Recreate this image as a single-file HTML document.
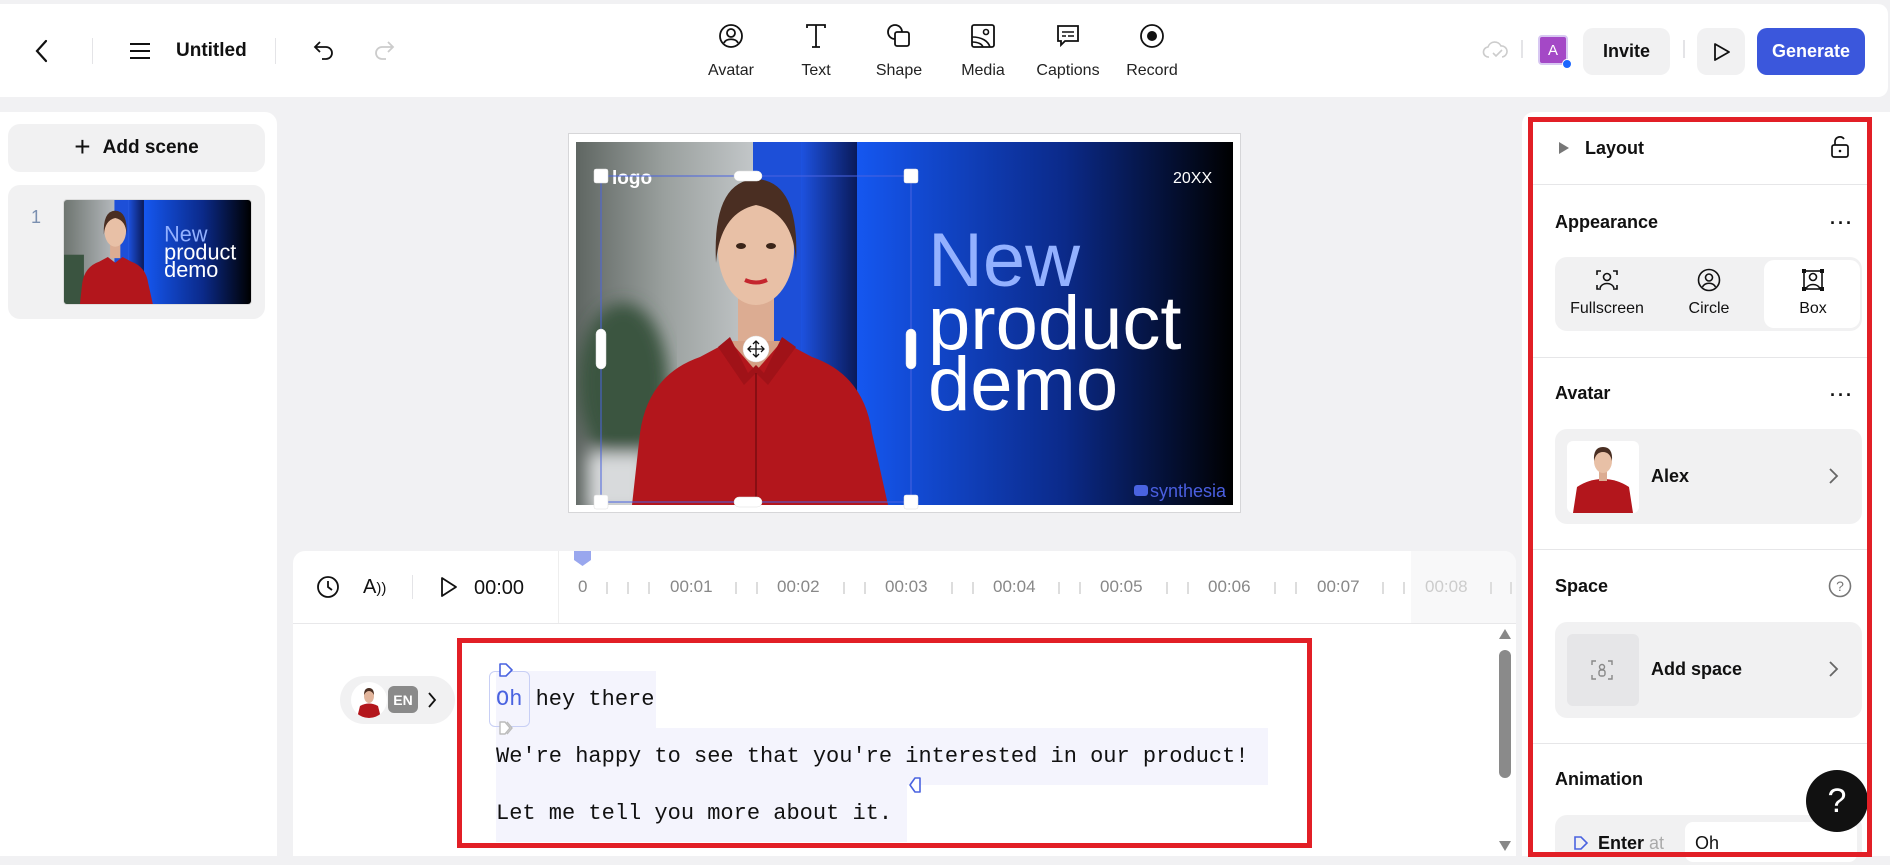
<!DOCTYPE html>
<html><head><meta charset="utf-8"><style>
*{box-sizing:border-box;margin:0;padding:0}
body{width:1890px;height:856px;overflow:hidden;background:#f1f1f3;font-family:"Liberation Sans",sans-serif;color:#111;position:relative}
.a{position:absolute}
.top{left:0;top:4px;width:1888px;height:93px;background:#fff;border-radius:0 10px 10px 0}
.sep{position:absolute;width:1px;background:#e4e4e7}
.tool{position:absolute;top:23px;width:80px;text-align:center;font-size:16px;color:#222}
.tool svg{display:block;margin:0 auto 13px}
.btn{position:absolute;border-radius:10px;background:#f1f1f2;font-weight:bold;font-size:18px;display:flex;align-items:center;justify-content:center}
.rp{left:1522px;top:112px;width:368px;height:744px;background:#fff;border-radius:12px 0 0 0}
.h{position:absolute;font-weight:bold;font-size:18px;color:#111}
.div{position:absolute;left:1532px;width:340px;height:1px;background:#e6e6e8}
.dots{position:absolute;font-size:18px;font-weight:bold;letter-spacing:2px}
.card{position:absolute;left:1555px;width:307px;background:#f1f1f2;border-radius:12px}
.mono{font-family:"Liberation Mono",monospace;font-size:22px;color:#111}
.tl{position:absolute;top:577px;font-size:17px;color:#888}
.tick{position:absolute;top:582px;width:2px;height:12px;background:#ddd}
</style></head><body>

<div class="a top"></div>
<svg class="a" style="left:32px;top:38px" width="20" height="26" viewBox="0 0 20 26"><path d="M14 3 L5 13 L14 23" fill="none" stroke="#111" stroke-width="2.2" stroke-linecap="round"/></svg>
<div class="sep" style="left:92px;top:38px;height:26px"></div>
<svg class="a" style="left:128px;top:41px" width="24" height="20"><path d="M2 3H22M2 10H22M2 17H22" stroke="#111" stroke-width="2"/></svg>
<div class="a" style="left:176px;top:40px;font-size:19px;font-weight:bold">Untitled</div>
<div class="sep" style="left:275px;top:38px;height:26px"></div>
<svg class="a" style="left:312px;top:38px" width="24" height="24" viewBox="0 0 24 24"><path d="M8 4 L3 9 L8 14 M3 9 H14 A6 6 0 0 1 14 21 H10" fill="none" stroke="#111" stroke-width="1.8"/></svg>
<svg class="a" style="left:372px;top:38px" width="24" height="24" viewBox="0 0 24 24"><path d="M16 4 L21 9 L16 14 M21 9 H10 A6 6 0 0 0 10 21 H14" fill="none" stroke="#ccc" stroke-width="1.8"/></svg>

<div class="tool" style="left:691px"><svg width="26" height="26" viewBox="0 0 26 26"><circle cx="13" cy="13" r="11" fill="none" stroke="#111" stroke-width="1.8"/><circle cx="13" cy="10" r="4" fill="none" stroke="#111" stroke-width="1.8"/><path d="M6 20 C8 15 18 15 20 20" fill="none" stroke="#111" stroke-width="1.8"/></svg>Avatar</div>
<div class="tool" style="left:776px"><svg width="26" height="26" viewBox="0 0 26 26"><path d="M4 5 V2 H22 V5 M13 2 V24 M9 24 H17" fill="none" stroke="#111" stroke-width="1.8"/></svg>Text</div>
<div class="tool" style="left:859px"><svg width="26" height="26" viewBox="0 0 26 26"><path d="M9 16 A7 7 0 1 1 16 9" fill="none" stroke="#111" stroke-width="1.8"/><rect x="9" y="9" width="14" height="14" rx="2" fill="none" stroke="#111" stroke-width="1.8"/></svg>Shape</div>
<div class="tool" style="left:943px"><svg width="26" height="26" viewBox="0 0 26 26"><rect x="2" y="2" width="22" height="22" rx="2" fill="none" stroke="#111" stroke-width="1.8"/><circle cx="16" cy="9" r="2.5" fill="none" stroke="#111" stroke-width="1.6"/><path d="M2 14 C12 14 18 18 20 24 M2 19 C8 19 12 21 13 24" fill="none" stroke="#111" stroke-width="1.6"/></svg>Media</div>
<div class="tool" style="left:1028px"><svg width="26" height="26" viewBox="0 0 26 26"><path d="M3 3 H23 V18 H10 L6 22 V18 H3 Z" fill="none" stroke="#111" stroke-width="1.8"/><path d="M7 9H19M7 13H11M13 13H19" stroke="#111" stroke-width="1.5"/></svg>Captions</div>
<div class="tool" style="left:1112px"><svg width="26" height="26" viewBox="0 0 26 26"><circle cx="13" cy="13" r="11" fill="none" stroke="#111" stroke-width="1.8"/><circle cx="13" cy="13" r="5" fill="#111"/></svg>Record</div>

<svg class="a" style="left:1482px;top:40px" width="26" height="20" viewBox="0 0 26 20"><path d="M7 17 A5 5 0 0 1 6 7 A7 7 0 0 1 19 6 A5 5 0 0 1 20 17 M11 13 L14 16 L20 10" fill="none" stroke="#ccc" stroke-width="1.6"/></svg>
<div class="sep" style="left:1521px;top:40px;height:18px;width:2px"></div>
<div class="a" style="left:1538px;top:35px;width:30px;height:30px;border-radius:4px;background:#a448c6;border:2px solid #d8c8f2;color:#fff;font-size:15px;display:flex;align-items:center;justify-content:center">A</div>
<div class="a" style="left:1562px;top:59px;width:10px;height:10px;border-radius:50%;background:#1b66ff;border:1.5px solid #fff"></div>
<div class="btn" style="left:1583px;top:28px;width:87px;height:47px">Invite</div>
<div class="sep" style="left:1683px;top:40px;height:18px;width:2px"></div>
<div class="btn" style="left:1697px;top:28px;width:48px;height:47px"><svg width="22" height="22" viewBox="0 0 22 22"><path d="M5 3 L19 11 L5 19 Z" fill="none" stroke="#111" stroke-width="1.8" stroke-linejoin="round"/></svg></div>
<div class="btn" style="left:1757px;top:28px;width:108px;height:47px;background:#3b57dc;color:#fff">Generate</div>

<!-- left panel -->
<div class="a" style="left:0;top:112px;width:277px;height:744px;background:#fff;border-radius:0 12px 0 0"></div>
<div class="a" style="left:8px;top:124px;width:257px;height:48px;background:#f1f1f2;border-radius:12px;display:flex;align-items:center;justify-content:center;font-size:19px;font-weight:bold"><span style="font-weight:normal;font-size:28px;margin-right:12px;margin-top:-3px">+</span>Add scene</div>
<div class="a" style="left:8px;top:185px;width:257px;height:134px;background:#f1f1f2;border-radius:12px"></div>
<div class="a" style="left:31px;top:207px;font-size:18px;color:#7a8fb0">1</div>
<svg class="a" style="left:63px;top:199px;border-radius:4px;border:1px solid #ddd" width="189" height="106" viewBox="8 9 657 363" preserveAspectRatio="none">
<defs><linearGradient id="g1b" x1="0" x2="1"><stop offset="0" stop-color="#1557f0"/><stop offset="0.55" stop-color="#0b2a8a"/><stop offset="1" stop-color="#000"/></linearGradient><linearGradient id="g2b" x1="0" x2="1"><stop offset="0" stop-color="#1d52e0"/><stop offset="1" stop-color="#0a1a5a"/></linearGradient><linearGradient id="bgb" x1="0" x2="1"><stop offset="0" stop-color="#6e7570"/><stop offset="1" stop-color="#b4b8bc"/></linearGradient></defs>
<rect x="8" y="9" width="177" height="363" fill="url(#bgb)"/><rect x="8" y="200" width="70" height="172" fill="#3a5440"/>
<rect x="185" y="9" width="48" height="363" fill="#1d4fd8"/><rect x="233" y="9" width="56" height="363" fill="url(#g2b)"/><rect x="289" y="9" width="376" height="363" fill="url(#g1b)"/>
<path d="M64 372 L72 300 Q80 242 132 224 L162 208 L188 228 L214 208 L244 224 Q296 242 304 300 L320 372 Z" fill="#b3161c"/><rect x="170" y="160" width="36" height="52" fill="#dcac92"/><ellipse cx="188" cy="117" rx="38" ry="55" fill="#e8c0a6"/><path d="M148 130 Q144 48 188 46 Q232 48 228 130 Q226 80 188 72 Q152 80 148 130Z" fill="#4a2e22"/>
<text x="360" y="153" font-size="76" fill="#93b1ff" font-family="Liberation Sans">New</text><text x="360" y="216" font-size="76" fill="#fff" font-family="Liberation Sans">product</text><text x="360" y="277" font-size="76" fill="#fff" font-family="Liberation Sans">demo</text>
</svg>

<!-- canvas -->
<svg class="a" style="left:568px;top:133px" width="673" height="380" viewBox="0 0 673 380">
<defs><linearGradient id="g1" x1="0" x2="1"><stop offset="0" stop-color="#1557f0"/><stop offset="0.55" stop-color="#0b2a8a"/><stop offset="1" stop-color="#000"/></linearGradient><linearGradient id="g2" x1="0" x2="1"><stop offset="0" stop-color="#1d52e0"/><stop offset="1" stop-color="#0a1a5a"/></linearGradient><linearGradient id="bg" x1="0" x2="1"><stop offset="0" stop-color="#5f6662"/><stop offset="0.5" stop-color="#9aa09e"/><stop offset="1" stop-color="#c2c6c8"/></linearGradient><filter id="bl"><feGaussianBlur stdDeviation="8"/></filter><clipPath id="cp"><rect x="8" y="9" width="657" height="363"/></clipPath></defs>
<rect x="0.5" y="0.5" width="672" height="379" fill="#fff" stroke="#d6d6d8"/>
<g clip-path="url(#cp)">
<rect x="8" y="9" width="177" height="363" fill="url(#bg)"/>
<g filter="url(#bl)"><ellipse cx="55" cy="250" rx="45" ry="80" fill="#3a5540"/><rect x="20" y="320" width="60" height="60" fill="#d8dadc"/></g>
<rect x="185" y="9" width="48" height="363" fill="#1d4fd8"/><rect x="233" y="9" width="56" height="363" fill="url(#g2)"/><rect x="289" y="9" width="376" height="363" fill="url(#g1)"/>
<path d="M64 372 L72 300 Q80 242 132 224 L162 208 L188 228 L214 208 L244 224 Q296 242 304 300 L320 372 Z" fill="#b3161c"/>
<rect x="170" y="160" width="36" height="52" fill="#dcac92"/>
<path d="M162 208 L188 238 L214 208 Z" fill="#d4a085"/>
<path d="M150 214 L162 204 L180 240 L188 232 L196 240 L214 204 L228 214 L200 252 L188 240 L176 252 Z" fill="#a01218"/>
<line x1="188" y1="240" x2="188" y2="372" stroke="#7a0c10" stroke-width="1.5"/>
<ellipse cx="188" cy="117" rx="38" ry="55" fill="#e8c0a6"/>
<path d="M148 130 Q144 48 188 46 Q232 48 228 130 Q226 80 188 72 Q152 80 148 130Z" fill="#4a2e22"/>
<ellipse cx="173" cy="113" rx="5" ry="3" fill="#3a2418"/><ellipse cx="203" cy="113" rx="5" ry="3" fill="#3a2418"/>
<path d="M177 147 Q188 152 199 147" stroke="#c4262e" stroke-width="4" fill="none"/>
</g>
<text x="44" y="51" font-size="19" font-weight="bold" fill="#fff" font-family="Liberation Sans">logo</text>
<text x="605" y="50" font-size="16" fill="#fff" font-family="Liberation Sans">20XX</text>
<text x="360" y="153" font-size="76" fill="#93b1ff" font-family="Liberation Sans">New</text>
<text x="360" y="216" font-size="76" fill="#fff" font-family="Liberation Sans">product</text>
<text x="360" y="277" font-size="76" fill="#fff" font-family="Liberation Sans">demo</text>
<rect x="567" y="268" width="0" height="0"/>
<rect x="566" y="270" width="0" height="0"/>
<rect x="565" y="269" width="0" height="0"/>
<rect x="566" y="268" width="0" height="0"/>
<rect x="566" y="270" width="0" height="0"/>
<rect x="566" y="269" width="0" height="0"/>
<rect x="565" y="269" width="0" height="0"/>
<rect x="565" y="268" width="0" height="0"/>
<rect x="565" y="268" width="0" height="0"/>
<rect x="565" y="269" width="0" height="0"/>
<rect x="565" y="268" width="0" height="0"/>
<rect x="565" y="269" width="0" height="0"/>
<rect x="564" y="268" width="0" height="0"/>
<rect x="565" y="268" width="0" height="0"/>
<rect x="565" y="268" width="0" height="0"/>
<rect x="565" y="268" width="0" height="0"/>
<rect x="565" y="268" width="0" height="0"/>
<rect x="565" y="268" width="0" height="0"/>
<rect x="565" y="268" width="0" height="0"/>
<rect x="566" y="268" width="0" height="0"/>
<rect x="566" y="268" width="0" height="0"/>
<rect x="565" y="268" width="0" height="0"/>
<rect x="566" y="268" width="0" height="0"/>
<rect x="566" y="268" width="0" height="0"/>
<rect x="565" y="268" width="0" height="0"/>
<rect x="566" y="268" width="0" height="0"/>
<rect x="566" y="268" width="0" height="0"/>
<rect x="565" y="268" width="0" height="0"/>
<rect x="566" y="268" width="0" height="0"/>
<rect x="566" y="268" width="0" height="0"/>
<rect x="566" y="268" width="0" height="0"/>
<rect x="566" y="268" width="0" height="0"/>
<rect x="566" y="268" width="0" height="0"/>
<rect x="566" y="268" width="0" height="0"/>
<rect x="566" y="268" width="0" height="0"/>
<rect x="566" y="268" width="0" height="0"/>
<rect x="566" y="268" width="0" height="0"/>
<rect x="566" y="268" width="0" height="0"/>
<rect x="566" y="268" width="0" height="0"/>
<rect x="566" y="268" width="0" height="0"/>
<rect x="566" y="268" width="0" height="0"/>
<rect x="566" y="268" width="0" height="0"/>
<rect x="566" y="268" width="0" height="0"/>
<rect x="566" y="268" width="0" height="0"/>
<rect x="566" y="268" width="0" height="0"/>
<rect x="566" y="268" width="0" height="0"/>
<rect x="566" y="268" width="0" height="0"/>
<rect x="566" y="268" width="0" height="0"/>
<rect x="566" y="268" width="0" height="0"/>
<rect x="566" y="268" width="0" height="0"/>
<rect x="566" y="268" width="0" height="0"/>
<rect x="566" y="268" width="0" height="0"/>
<rect x="566" y="268" width="0" height="0"/>
<rect x="566" y="268" width="0" height="0"/>
<rect x="566" y="268" width="0" height="0"/>
<rect x="566" y="268" width="0" height="0"/>
<rect x="566" y="268" width="0" height="0"/>
<rect x="566" y="268" width="0" height="0"/>
<rect x="566" y="268" width="0" height="0"/>
<rect x="566" y="268" width="0" height="0"/>
<rect x="566" y="352" width="14" height="11" rx="3" fill="#4a63e0"/><text x="582" y="364" font-size="18" fill="#4a5fe0" font-family="Liberation Sans">synthesia</text>
<rect x="33" y="43" width="310" height="326" fill="none" stroke="#4a63e0" stroke-width="1"/>
<g fill="#fff" stroke="#ddd" stroke-width="0.5">
<rect x="26" y="36" width="14" height="14" rx="2"/><rect x="336" y="36" width="14" height="14" rx="2"/><rect x="26" y="362" width="14" height="14" rx="2"/><rect x="336" y="362" width="14" height="14" rx="2"/>
<rect x="166" y="38" width="28" height="10" rx="5"/><rect x="166" y="364" width="28" height="10" rx="5"/>
<rect x="28" y="196" width="10" height="40" rx="5"/><rect x="338" y="196" width="10" height="40" rx="5"/>
<circle cx="188" cy="216" r="13"/></g>
<path d="M188 208 V224 M180 216 H196 M185 211 L188 208 L191 211 M185 221 L188 224 L191 221 M183 213 L180 216 L183 219 M193 213 L196 216 L193 219" stroke="#111" stroke-width="1.3" fill="none"/>
</svg>

<!-- timeline panel -->
<div class="a" style="left:293px;top:551px;width:1223px;height:305px;background:#fff;border-radius:12px 12px 0 0"></div>
<div class="a" style="left:1411px;top:551px;width:105px;height:72px;background:#f8f8f9;border-radius:0 12px 0 0"></div>
<div class="a" style="left:293px;top:623px;width:1223px;height:1px;background:#e8e8ea"></div>
<div class="a" style="left:558px;top:551px;width:1px;height:72px;background:#eee"></div>
<svg class="a" style="left:316px;top:575px" width="24" height="24" viewBox="0 0 24 24"><circle cx="12" cy="12" r="10" fill="none" stroke="#111" stroke-width="1.8"/><path d="M12 6 V12 L16 15" fill="none" stroke="#111" stroke-width="1.8"/></svg>
<div class="a" style="left:363px;top:576px;font-size:20px">A<span style="font-size:15px">))</span></div>
<div class="sep" style="left:412px;top:575px;height:24px"></div>
<svg class="a" style="left:438px;top:575px" width="22" height="24" viewBox="0 0 22 24"><path d="M4 3 L18 12 L4 21 Z" fill="none" stroke="#111" stroke-width="1.8" stroke-linejoin="round"/></svg>
<div class="a" style="left:474px;top:577px;font-size:20px">00:00</div>
<svg class="a" style="left:574px;top:551px" width="18" height="16"><path d="M0 0 H17 V9 L8.5 15 L0 9 Z" fill="#99a7ee"/></svg>
<div class="tl" style="left:578px">0</div>
<div class="tick" style="left:606px"></div><div class="tick" style="left:627px"></div><div class="tick" style="left:648px"></div>
<div class="tl" style="left:670px">00:01</div><div class="tick" style="left:735px"></div><div class="tick" style="left:756px"></div>
<div class="tl" style="left:777px">00:02</div><div class="tick" style="left:843px"></div><div class="tick" style="left:864px"></div>
<div class="tl" style="left:885px">00:03</div><div class="tick" style="left:951px"></div><div class="tick" style="left:972px"></div>
<div class="tl" style="left:993px">00:04</div><div class="tick" style="left:1058px"></div><div class="tick" style="left:1079px"></div>
<div class="tl" style="left:1100px">00:05</div><div class="tick" style="left:1166px"></div><div class="tick" style="left:1187px"></div>
<div class="tl" style="left:1208px">00:06</div><div class="tick" style="left:1274px"></div><div class="tick" style="left:1295px"></div>
<div class="tl" style="left:1317px">00:07</div><div class="tick" style="left:1382px"></div><div class="tick" style="left:1403px"></div>
<div class="tl" style="left:1425px;color:#ccc">00:08</div><div class="tick" style="left:1490px"></div><div class="tick" style="left:1510px"></div>

<svg class="a" style="left:1498px;top:628px" width="14" height="12"><path d="M1 11 L7 1 L13 11Z" fill="#888"/></svg>
<div class="a" style="left:1499px;top:650px;width:12px;height:128px;background:#8a8a8a;border-radius:6px"></div>
<svg class="a" style="left:1498px;top:840px" width="14" height="12"><path d="M1 1 L7 11 L13 1Z" fill="#888"/></svg>

<!-- script -->
<div class="a" style="left:340px;top:676px;width:115px;height:48px;background:#f1f1f2;border-radius:24px"></div>
<div class="a" style="left:351px;top:682px;width:36px;height:36px;border-radius:50%;background:#fff;overflow:hidden"><svg width="36" height="36"><path d="M6 36 L9 24 Q18 19 27 24 L30 36Z" fill="#b3161c"/><ellipse cx="18" cy="14" rx="5" ry="7" fill="#e2b59c"/><path d="M13 13 Q13 6 18 6 Q23 6 23 13 Q21 9 18 9 Q15 9 13 13Z" fill="#4a2e22"/></svg></div>
<div class="a" style="left:388px;top:686px;width:30px;height:27px;background:#8a8a8a;border-radius:6px;color:#fff;font-weight:bold;font-size:14px;display:flex;align-items:center;justify-content:center">EN</div>
<svg class="a" style="left:426px;top:690px" width="12" height="20"><path d="M3 3 L9 10 L3 17" fill="none" stroke="#111" stroke-width="1.8"/></svg>

<div class="a" style="left:496px;top:671px;width:160px;height:57px;background:#f4f4fd"></div>
<div class="a" style="left:496px;top:728px;width:772px;height:57px;background:#f4f4fd"></div>
<div class="a" style="left:496px;top:785px;width:411px;height:57px;background:#f4f4fd"></div>
<div class="a" style="left:489px;top:671px;width:41px;height:56px;border:1px solid #c8cff5;border-radius:6px"></div>
<svg class="a" style="left:498px;top:662px" width="16" height="16"><path d="M2 2 H8 L14 8 L8 14 H2 Z" fill="#fff" stroke="#4a63e0" stroke-width="1.6" stroke-linejoin="round"/></svg>
<svg class="a" style="left:498px;top:720px" width="18" height="16"><path d="M2 2 H7 L12 8 L7 14 H2 Z M9 2 L14 8 L9 14" fill="#fff" stroke="#bbb" stroke-width="1.4" stroke-linejoin="round"/></svg>
<svg class="a" style="left:908px;top:776px" width="14" height="18"><path d="M12 2 V16 H7 L2 9 L7 2 Z" fill="#fff" stroke="#4a63e0" stroke-width="1.6" stroke-linejoin="round"/></svg>
<div class="a mono" style="left:496px;top:687px"><span style="color:#4a63e0">Oh</span> hey there</div>
<div class="a mono" style="left:496px;top:744px">We're happy to see that you're interested in our product!</div>
<div class="a mono" style="left:496px;top:801px">Let me tell you more about it.</div>
<div class="a" style="left:457px;top:638px;width:855px;height:210px;border:5px solid #e21f26"></div>

<!-- right panel -->
<div class="a rp"></div>
<svg class="a" style="left:1557px;top:141px" width="14" height="14"><path d="M2 1 L12 7 L2 13Z" fill="#777"/></svg>
<div class="h" style="left:1585px;top:138px">Layout</div>
<svg class="a" style="left:1829px;top:135px" width="22" height="24" viewBox="0 0 22 24"><rect x="3" y="10" width="16" height="12" rx="2" fill="none" stroke="#111" stroke-width="1.7"/><path d="M6 10 V6 A5 5 0 0 1 15 4" fill="none" stroke="#111" stroke-width="1.7"/><circle cx="11" cy="16" r="1.3" fill="#111"/></svg>
<div class="div" style="top:184px"></div>
<div class="h" style="left:1555px;top:212px">Appearance</div>
<div class="dots" style="left:1830px;top:213px">···</div>
<div class="a" style="left:1555px;top:257px;width:307px;height:74px;background:#f1f1f2;border-radius:12px"></div>
<div class="a" style="left:1764px;top:260px;width:96px;height:68px;background:#fff;border-radius:10px"></div>
<svg class="a" style="left:1595px;top:268px" width="24" height="24" viewBox="0 0 24 24"><path d="M2 7 V3 H6 M18 3 H22 V7 M2 17 V21 H6 M18 21 H22 V17" fill="none" stroke="#111" stroke-width="1.6"/><circle cx="12" cy="9" r="3.5" fill="none" stroke="#111" stroke-width="1.6"/><path d="M5 20 C7 14 17 14 19 20" fill="none" stroke="#111" stroke-width="1.6"/></svg>
<svg class="a" style="left:1697px;top:268px" width="24" height="24" viewBox="0 0 24 24"><circle cx="12" cy="12" r="10.5" fill="none" stroke="#111" stroke-width="1.6"/><circle cx="12" cy="9.5" r="3.5" fill="none" stroke="#111" stroke-width="1.6"/><path d="M5.5 19 C8 14 16 14 18.5 19" fill="none" stroke="#111" stroke-width="1.6"/></svg>
<svg class="a" style="left:1801px;top:268px" width="24" height="24" viewBox="0 0 24 24"><rect x="3" y="3" width="18" height="18" fill="none" stroke="#111" stroke-width="1.6"/><rect x="1" y="1" width="4" height="4" fill="#111"/><rect x="19" y="1" width="4" height="4" fill="#111"/><rect x="1" y="19" width="4" height="4" fill="#111"/><rect x="19" y="19" width="4" height="4" fill="#111"/><circle cx="12" cy="9" r="3.5" fill="none" stroke="#111" stroke-width="1.6"/><path d="M5 21 C7 15 17 15 19 21" fill="none" stroke="#111" stroke-width="1.6"/></svg>
<div class="a" style="left:1565px;top:300px;width:84px;text-align:center;font-size:16px">Fullscreen</div>
<div class="a" style="left:1669px;top:300px;width:80px;text-align:center;font-size:16px">Circle</div>
<div class="a" style="left:1773px;top:300px;width:80px;text-align:center;font-size:16px">Box</div>
<div class="div" style="top:357px"></div>
<div class="h" style="left:1555px;top:383px">Avatar</div>
<div class="dots" style="left:1830px;top:385px">···</div>
<div class="card" style="top:429px;height:95px"></div>
<div class="a" style="left:1567px;top:441px;width:72px;height:72px;background:#fff;border-radius:6px;overflow:hidden"><svg width="72" height="72"><path d="M6 72 L10 46 Q22 38 36 38 Q50 38 62 46 L66 72Z" fill="#b3161c"/><rect x="32" y="26" width="8" height="14" fill="#dcac92"/><ellipse cx="36" cy="20" rx="9" ry="12" fill="#e8c0a6"/><path d="M27 20 Q26 6 36 6 Q46 6 45 20 Q43 11 36 11 Q29 11 27 20Z" fill="#4a2e22"/></svg></div>
<div class="h" style="left:1651px;top:466px">Alex</div>
<svg class="a" style="left:1827px;top:466px" width="14" height="20"><path d="M3 3 L10 10 L3 17" fill="none" stroke="#666" stroke-width="1.8"/></svg>
<div class="div" style="top:549px"></div>
<div class="h" style="left:1555px;top:576px">Space</div>
<svg class="a" style="left:1828px;top:574px" width="24" height="24" viewBox="0 0 24 24"><circle cx="12" cy="12" r="10.5" fill="none" stroke="#777" stroke-width="1.6"/><text x="12" y="17" font-size="14" text-anchor="middle" fill="#777" font-family="Liberation Sans">?</text></svg>
<div class="card" style="top:622px;height:96px"></div>
<div class="a" style="left:1567px;top:634px;width:72px;height:72px;background:#e6e6e8;border-radius:6px"></div>
<svg class="a" style="left:1590px;top:658px" width="24" height="24" viewBox="0 0 24 24"><path d="M2 7 V3 H6 M18 3 H22 V7 M2 17 V21 H6 M18 21 H22 V17" fill="none" stroke="#888" stroke-width="1.4"/><circle cx="12" cy="9" r="2.5" fill="none" stroke="#888" stroke-width="1.4"/><rect x="9" y="12" width="6" height="6" rx="2" fill="none" stroke="#888" stroke-width="1.4"/></svg>
<div class="h" style="left:1651px;top:659px">Add space</div>
<svg class="a" style="left:1827px;top:659px" width="14" height="20"><path d="M3 3 L10 10 L3 17" fill="none" stroke="#666" stroke-width="1.8"/></svg>
<div class="div" style="top:743px"></div>
<div class="h" style="left:1555px;top:769px">Animation</div>
<div class="a" style="left:1555px;top:815px;width:307px;height:50px;background:#f1f1f2;border-radius:12px"></div>
<svg class="a" style="left:1573px;top:835px" width="16" height="16"><path d="M2 2 H8 L14 8 L8 14 H2 Z" fill="none" stroke="#4a63e0" stroke-width="1.6"/></svg>
<div class="a" style="left:1598px;top:833px;font-size:18px;font-weight:bold">Enter <span style="font-weight:normal;color:#aaa">at</span></div>
<div class="a" style="left:1685px;top:822px;width:172px;height:40px;background:#fff;border-radius:8px;font-size:18px;padding:11px 10px">Oh</div>
<div class="a" style="left:1806px;top:770px;width:62px;height:62px;border-radius:50%;background:#111;color:#fff;font-size:34px;display:flex;align-items:center;justify-content:center">?</div>
<div class="a" style="left:1528px;top:117px;width:344px;height:740px;border:5px solid #e21f26"></div>
</body></html>
